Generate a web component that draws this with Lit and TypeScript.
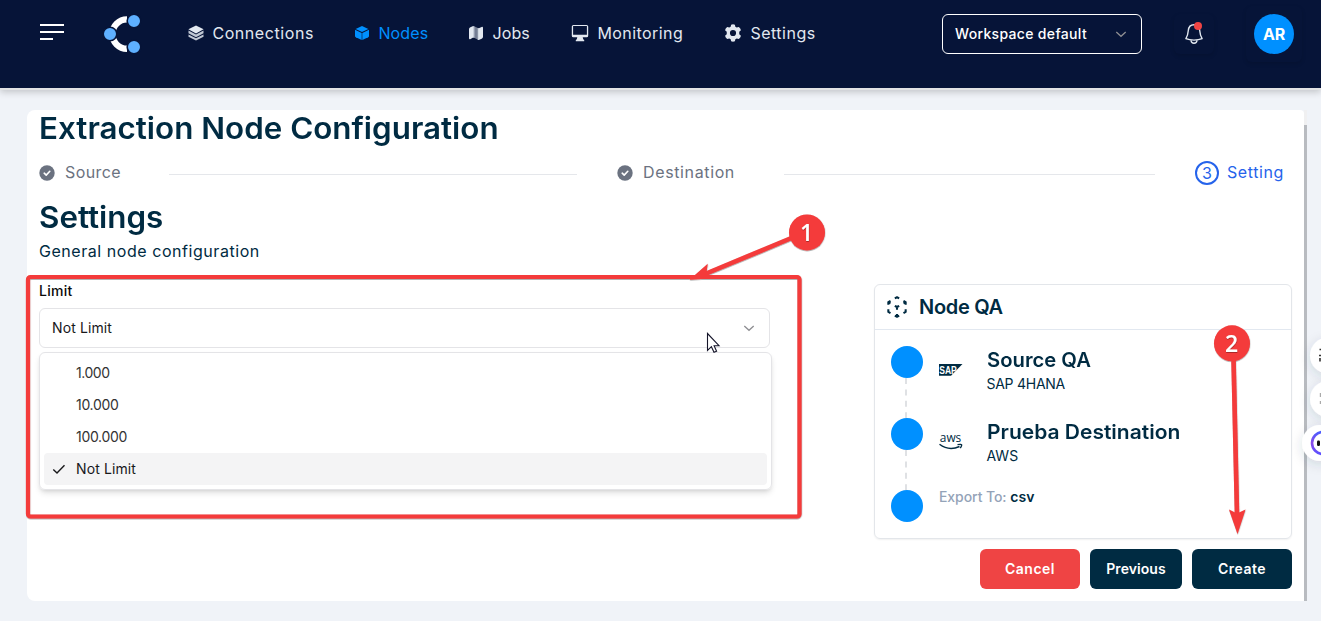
import { LitElement, html, css, svg } from 'lit';
import { customElement, property } from 'lit/decorators.js';
import { classMap } from 'lit/directives/class-map.js';

const icons = {
  layers: svg`<svg class="ico" width="16" height="16" viewBox="0 0 16 16"><path d="M8 .4 15.600 4.300 8 8.400.4 4.300Z"/><path d="M.5 5.600 8 9.400l7.500-3.800v2.700L8 12.200.5 8.300Z" opacity=".85"/><path d="M.5 9.400 8 13.200l7.500-3.800v2.300L8 15.600.5 11.700Z" opacity=".85"/></svg>`,
  cube: svg`<svg class="ico" width="16" height="16" viewBox="0 0 16 16"><path d="M8 .9 14.400 3.900 8 7.100 1.600 3.900Z"/><path d="M1 4.700 7.700 8v7L1.800 12.300Q1 11.900 1 11.100Z"/><path d="M15 4.700 8.300 8v7l5.900-2.700Q15 11.900 15 11.100Z"/></svg>`,
  map: svg`<svg class="ico" width="16" height="16" viewBox="0 0 16 16"><path d="M1 4.200Q1 2.600 2.400 2.200L5.200 1v11.600L2.600 14Q1 14.800 1 13Z"/><path d="M5.600 1 10.400 3.200V15L5.600 12.600Z" opacity=".5"/><path d="M5.200 1 6.300 1.400V12.800H5.200ZM9.800 3 10.900 3.200V15H9.800Z"/><path d="M10.800 3.200 13.600 1.900Q15 1.400 15 3V11.800Q15 13.200 13.600 13.800L10.800 15Z"/></svg>`,
  monitor: svg`<svg class="ico" width="18" height="18" viewBox="0 0 18 18"><path fill-rule="evenodd" d="M2.400.9h13.200q1.600 0 1.600 1.600v9.200q0 1.600-1.600 1.600H2.400q-1.600 0-1.600-1.600V2.500Q.8.9 2.400.9ZM2.100 2.100v8.600h13.800V2.100Z"/><path d="M6.300 13h5.400l.5 2.300 1 .6v1.300H4.800v-1.300l1-.6Z"/></svg>`,
  gear: svg`<svg class="ico gear" width="18" height="18" viewBox="0.500 0.500 17 17"><path fill-rule="evenodd" d="M7.200 1.200Q9 .4 10.800 1.200L11.200 3.200 12.500 3.900 14.500 3.300Q16.200 4.500 16.500 6.400L14.900 7.800V10.200L16.500 11.600Q16.200 13.500 14.500 14.700L12.500 14.100 11.200 14.800 10.800 16.800Q9 17.600 7.200 16.800L6.800 14.800 5.500 14.100 3.500 14.700Q1.800 13.500 1.500 11.600L3.100 10.200V7.800L1.500 6.400Q1.800 4.500 3.500 3.300L5.500 3.900 6.800 3.200ZM9 6.100A2.900 2.900 0 1 0 9 11.900 2.900 2.900 0 1 0 9 6.100Z"/></svg>`,
};

const chevron = svg`<svg class="chev" width="16" height="16" viewBox="0 0 16 16"><path d="M3.300 6 8 10.300 12.700 6"/></svg>`;
const tick = svg`<svg class="done" width="16" height="16" viewBox="0 0 16 16"><circle cx="8" cy="8" r="7.700"/><path d="M5.200 8.200 7.200 10.100 10.800 6.300"/></svg>`;

@customElement('nav-item')
export class NavItem extends LitElement {
  @property() icon: keyof typeof icons = 'layers';
  @property() label = '';
  @property({ type: Boolean, reflect: true }) active = false;
  static styles = css`
    :host { display: flex; align-items: center; color: #e2e8f0; font-size: 16px; white-space: nowrap; }
    :host([active]) { color: #0090ff; }
    .ico { fill: currentColor; flex: none; }
    .gear { margin-left: -.5px; }
    .label { margin-left: 8.400px; line-height: 20px; }
  `;
  render() {
    return html`${icons[this.icon]}<span class="label">${this.label}</span>`;
  }
}

@customElement('app-root')
export class AppRoot extends LitElement {
  private options = [
    { label: '1.000', cls: 'n1' },
    { label: '10.000', cls: 'n2' },
    { label: '100.000', cls: 'n2' },
    { label: 'Not Limit', cls: 'nl' },
  ];
  private selected = 'Not Limit';

  static styles = css`
    :host { display: block; position: relative; height: 621px; overflow: hidden; background: #f0f3f8; color: #002b42; font-family: Inter, "Noto Sans", sans-serif; }
    * { box-sizing: border-box; }
    .page { display: flex; flex-direction: column; height: 100%; }

    header { height: 90px; flex: none; display: flex; align-items: flex-start; background: #061438; border-bottom: 2px solid #e2e3e5; box-shadow: 0 2px 7px rgba(0,0,0,.2); padding-left: 40px; }
    .burger { width: 24px; height: 18px; margin-top: 23px; display: flex; flex-direction: column; justify-content: space-between; padding: 1px 0; }
    .burger i { height: 2px; background: #fff; }
    .burger i:last-child { width: 13px; }
    .logo { margin: 12px 0 0 36px; width: 44px; height: 44px; flex: none; }
    nav { display: flex; height: 40px; margin: 13px 0 0 44px; align-items: center; }
    .i1 { width: 166px; letter-spacing: .57px; }
    .i2 { width: 114px; letter-spacing: .16px; }
    .i3 { width: 103px; letter-spacing: .13px; }
    .i4 { width: 153.500px; letter-spacing: .43px; }
    .i5 { width: 93px; letter-spacing: .5px; }
    .workspace { margin: 14px 0 0 124.500px; width: 200px; height: 40px; flex: none; border: 1px solid #fff; border-radius: 6px; display: flex; align-items: center; justify-content: space-between; padding: 0 12px; color: #fff; font-size: 14px; font-weight: 500; letter-spacing: .33px; }
    .workspace span, .select span { padding-bottom: 2px; }
    .chev { fill: none; stroke: #8e8e92; stroke-width: 1.300; flex: none; }
    .bell { margin: 14px 0 0 32px; width: 40px; height: 40px; flex: none; display: grid; place-items: center; border-radius: 6px; box-shadow: 0 2px 4px rgba(0,0,0,.12); }
    .avatar-box { margin: 6px 0 0 32px; width: 56px; height: 56px; flex: none; display: grid; place-items: center; border-radius: 6px; box-shadow: 0 2px 4px rgba(0,0,0,.12); }
    .avatar { width: 40px; height: 40px; border-radius: 50%; background: #0090ff; color: #fff; display: grid; place-items: center; font-size: 16px; font-weight: 700; letter-spacing: -.2px; }

    .body { margin: 20px 14px 20px 27px; height: 491px; display: flex; }
    .card { width: 1277px; height: 491px; background: #fff; border-radius: 8px 4px 0 8px; padding-left: 12px; }
    .scroll { width: 3px; background: #f0f0f1; padding-top: 15px; }
    .thumb { height: 476px; background: #b8bbc0; }
    h1, h2 { margin: 0; font-size: 30px; font-weight: 600; line-height: 36px; white-space: nowrap; transform-origin: left center; transform: scaleX(1.045); }
    .steps { display: flex; align-items: center; height: 24px; margin-top: 15px; font-size: 16px; color: #6b7280; }
    .step { display: flex; align-items: center; flex: none; }
    .step span { margin-left: 10px; padding-bottom: 2px; }
    .s1 { width: 130px; letter-spacing: .41px; }
    .s2 { width: 167px; letter-spacing: .63px; }
    .s3 { color: #2563eb; letter-spacing: .6px; }
    .step.s3 span { margin-left: 8px; }
    .ring { width: 24px; height: 24px; border: 2px solid #2563eb; border-radius: 50%; display: grid; place-items: center; letter-spacing: 0; }
    .done { fill: #6b7280; }
    .done path { fill: none; stroke: #fff; stroke-width: 1.600; stroke-linecap: round; stroke-linejoin: round; }
    .line { height: 1px; background: #e5e7eb; margin: 3px 40px 0 0; flex: none; }
    .l1 { width: 408px; }
    .l2 { width: 371px; }
    .columns { display: flex; align-items: flex-start; }
    .left { width: 835px; }
    .left h2 { margin-top: 14px; }
    .sub { font-size: 16px; line-height: 24px; letter-spacing: .55px; margin-top: 4px; }
    .lab { color: #0a0a0a; font-size: 14px; font-weight: 500; letter-spacing: .27px; line-height: 20px; margin-top: 18px; }
    .select { width: 731px; height: 40px; margin-top: 7px; border: 1px solid #e4e4e7; border-radius: 6px; padding: 0 12px; display: flex; align-items: center; justify-content: space-between; color: #18181b; font-size: 14px; }
    .list { width: 733px; height: 138px; margin-top: 4px; border: 1px solid #e4e4e7; border-radius: 6px; padding: 4px; box-shadow: 0 4px 6px -1px rgba(0,0,0,.12), 0 2px 4px -2px rgba(0,0,0,.12); font-size: 14px; color: #333; }
    .opt { height: 32px; display: grid; grid-template-columns: 32px 1fr; align-items: center; border-radius: 4px; }
    .opt > span:last-child { padding-bottom: 1px; }
    .opt.on { background: #f4f4f5; color: #18181b; }
    .opt svg { margin-left: 7px; display: block; }
    .n1 { letter-spacing: -.47px; }
    .n2 { letter-spacing: -.31px; }
    .nl { letter-spacing: .11px; }

    .right { width: 418px; margin-top: 99px; }
    .node { height: 255px; border: 1px solid #e3e6ea; border-radius: 6px; box-shadow: 0 1px 2px rgba(0,0,0,.06); }
    .node-head { height: 45px; border-bottom: 1px solid #e2e8f0; display: flex; align-items: center; gap: 9px; padding-left: 9px; font-size: 20px; font-weight: 600; letter-spacing: -.3px; }
    .row { display: grid; grid-template-columns: 48px 47.500px 1fr; height: 72px; }
    .rows { padding: 16px 0 0 16px; }
    .dot { width: 32px; }
    .dot i { display: block; height: 32px; border-radius: 50%; background: #0090ff; }
    .dash { display: block; margin-left: 14px; }
    .brand { margin-top: 12px; overflow: visible; }
    .name { font-size: 20px; line-height: 24px; font-weight: 600; margin-top: 2px; white-space: nowrap; transform-origin: left center; }
    .kind { font-size: 14px; line-height: 20px; margin-top: 2px; }
    .q1 { transform: scaleX(1.012); }
    .q2 { transform: scaleX(1.05); }
    .k1 { letter-spacing: -.26px; }
    .export { display: block; grid-column: 2 / 4; font-size: 14px; font-weight: 500; color: #94a3b8; line-height: 14px; letter-spacing: -.07px; }
    .export b { font-weight: 600; color: #002b42; letter-spacing: .1px; }
    .actions { display: flex; justify-content: flex-end; gap: 10px; margin-top: 10px; }
    button { border: 0; border-radius: 6px; height: 40px; width: 100px; padding: 0 0 1px; background: #002b42; color: #fff; font: 600 14px Inter, sans-serif; letter-spacing: .48px; }
    .cancel { background: #ef4444; }
    .prev { width: 92px; letter-spacing: .08px; }

    .overlay { position: absolute; left: 0; top: 0; pointer-events: none; }
    .mark { fill: none; stroke: #f43b3b; }
    .fill { fill: #f43b3b; }
    .num { fill: #fff; font-family: "Open Sans", "Noto Sans", sans-serif; font-weight: 600; text-anchor: middle; }
    .sap { font: 900 11px "Liberation Sans", sans-serif; fill: #fff; }
    .aws { font: 500 12.500px "Open Sans", sans-serif; fill: #002b42; }
  `;

  render() {
    return html`
      <div class="page">
        <header>
          <div class="burger"><i></i><i></i><i></i></div>
          <svg class="logo" viewBox="100 12 44 44">
            <path d="M127 19.400A14.700 14.700 0 0 0 127 48.800" fill="none" stroke="#fff" stroke-width="6.400"/>
            <g fill="#5eb0ff" stroke="#061438" stroke-width="1.600"><circle cx="134" cy="21" r="6.800"/><circle cx="110" cy="34" r="6.800"/><circle cx="134" cy="47" r="6.800"/></g>
          </svg>
          <nav>
            <nav-item class="i1" icon="layers" label="Connections"></nav-item>
            <nav-item class="i2" icon="cube" label="Nodes" active></nav-item>
            <nav-item class="i3" icon="map" label="Jobs"></nav-item>
            <nav-item class="i4" icon="monitor" label="Monitoring"></nav-item>
            <nav-item class="i5" icon="gear" label="Settings"></nav-item>
          </nav>
          <div class="workspace"><span>Workspace default</span>${chevron}</div>
          <div class="bell">
            <svg width="20" height="24" viewBox="0 0 20 24" fill="none" stroke="#e2e8f0" stroke-width="1.400" stroke-linejoin="round">
              <path d="M10 2.700C6.600 2.700 4.600 5.200 4.300 8.500C4 12 3.700 14 1.900 16.700C4 17.600 6.800 18.100 10 18.100S16 17.600 18.100 16.700C16.300 14 16 12 15.700 8.500C15.400 5.200 13.400 2.700 10 2.700Z"/>
              <path d="M7 18.200C7.200 20.500 8.500 21.300 10 21.300S12.800 20.500 13 18.200"/>
              <circle cx="14" cy="4" r="4" fill="#ef4444" stroke="none"/>
            </svg>
          </div>
          <div class="avatar-box"><div class="avatar">AR</div></div>
        </header>

        <div class="body">
          <main class="card">
            <h1>Extraction Node Configuration</h1>
            <div class="steps">
              <div class="step s1">${tick}<span>Source</span></div><div class="line l1"></div>
              <div class="step s2">${tick}<span>Destination</span></div><div class="line l2"></div>
              <div class="step s3"><div class="ring">3</div><span>Setting</span></div>
            </div>
            <div class="columns">
              <section class="left">
                <h2>Settings</h2>
                <div class="sub">General node configuration</div>
                <div class="lab">Limit</div>
                <div class="select"><span class="nl">${this.selected}</span>${chevron}</div>
                <div class="list">
                  ${this.options.map((o) => {
                    const on = o.label === this.selected;
                    return html`<div class=${classMap({ opt: true, on })}>
                      <span>${on ? svg`<svg width="16" height="12" viewBox="0 0 16 12" fill="none" stroke="#18181b" stroke-width="1.400"><path d="M2.300 6.600 6 10.100 13.500 2.300"/></svg>` : ''}</span>
                      <span class=${o.cls}>${o.label}</span></div>`;
                  })}
                </div>
              </section>
              <aside class="right">
                <div class="node">
                  <div class="node-head">
                    <svg width="26" height="26" viewBox="0 0 24 24" fill="none" stroke="#002b42" stroke-width="1.900" stroke-linejoin="round"><path d="M6 17.600l-2-1.100v-2.500M4 10v-2.500l2-1.100M10 4.100l2-1.100l2 1.100M18 6.400l2 1.100v2.500M20 14v2.500l-2 1.120M14 19.900l-2 1.100l-2-1.100M12 12l2-1.100M18 8.600l2-1.100M12 12v2.500M12 18.500v2.500M12 12l-2-1.120M6 8.600l-2-1.100"/></svg>
                    <span>Node QA</span>
                  </div>
                  <div class="rows">
                    <div class="row">
                      <div class="dot"><i></i>${this.dash()}</div>
                      <svg class="brand" width="24" height="24" viewBox="0 0 24 24"><path d="M0 6H23.500L12 17.800H0Z" fill="#002b42"/><text class="sap" x=".3" y="15.700" textLength="17.500" lengthAdjust="spacingAndGlyphs">SAP</text></svg>
                      <div><div class="name q1">Source QA</div><div class="kind k1">SAP 4HANA</div></div>
                    </div>
                    <div class="row">
                      <div class="dot"><i></i>${this.dash()}</div>
                      <svg class="brand" width="24" height="24" viewBox="0 0 24 24"><text class="aws" x=".800" y="12.300" textLength="21.500" lengthAdjust="spacingAndGlyphs">aws</text><path d="M.5 14.300Q10 21.500 20.500 16.500M18.500 14.600Q22.800 13.900 22.700 15T21.300 18.200" fill="none" stroke="#002b42" stroke-width="1.400"/></svg>
                      <div><div class="name q2">Prueba Destination</div><div class="kind">AWS</div></div>
                    </div>
                    <div class="row">
                      <div class="dot"><i></i></div>
                      <div class="export">Export To: <b>csv</b></div>
                    </div>
                  </div>
                </div>
                <div class="actions"><button class="cancel">Cancel</button><button class="prev">Previous</button><button>Create</button></div>
              </aside>
            </div>
          </main>
          <div class="scroll"><div class="thumb"></div></div>
        </div>
      </div>

      <svg class="overlay" width="1321" height="621" viewBox="0 0 1321 621">
        <defs>
          <linearGradient id="bot" x1="0" y1="0" x2="0" y2="1"><stop offset="0" stop-color="#4b5cff"/><stop offset=".5" stop-color="#8a4be8"/><stop offset="1" stop-color="#5b50ff"/></linearGradient>
          <filter id="soft" x="-50%" y="-50%" width="200%" height="200%"><feDropShadow dx="0" dy="3" stdDeviation="6" flood-color="#334155" flood-opacity=".15"/></filter>
          <filter id="drop" filterUnits="userSpaceOnUse" x="0" y="190" width="1321" height="360"><feDropShadow dx=".2" dy=".6" stdDeviation=".5" flood-color="#000" flood-opacity=".5"/></filter>
        </defs>
        <g fill="#fff">
          <circle cx="1328" cy="355.500" r="18" filter="url(#soft)"/>
          <circle cx="1328" cy="399" r="18" filter="url(#soft)"/>
          <circle cx="1320" cy="443" r="18" filter="url(#soft)"/>
        </g>
        <path d="M1319.500 349.500h2M1319 355.500h2M1320 358v3.500" stroke="#333" stroke-width="1.600"/>
        <path d="M1320.500 393v4M1320.500 401v3" stroke="#aaa" stroke-width="1.400"/>
        <circle cx="1323" cy="443" r="11" fill="#fff" stroke="url(#bot)" stroke-width="2.600"/>
        <rect x="1317" y="440.500" width="3" height="5.500" rx="1.200" fill="#111"/>
        <path d="M707.500 333.500V350.500L711.400 346.700 714 352.300 716.600 351.200 714.100 345.700H719Z" fill="#fff" stroke="#15152a" stroke-width="1.100"/>
        <g filter="url(#drop)">
          <rect class="mark" x="28" y="277" width="771.500" height="239.500" rx="2.500" stroke-width="4.200"/>
          <path class="mark" d="M795 236.500 705 274" stroke-width="4.600"/>
          <path class="fill" d="M689.500 279.800 707.700 263.700 706.500 272.700 713.500 278.300Z"/>
          <path class="mark" d="M1233.500 358 1237 514" stroke-width="4.600"/>
          <path class="fill" d="M1237.500 534 1229 509.500 1237 513.500 1245.500 509.500Z"/>
          <circle class="fill" cx="807" cy="232.400" r="18"/>
          <circle class="fill" cx="1232" cy="343.300" r="18"/>
        </g>
        <g filter="url(#drop)">
          <text class="num" x="806.500" y="240.600" font-size="23">1</text>
          <text class="num" x="1231.500" y="351.600" font-size="23">2</text>
        </g>
      </svg>
    `;
  }

  private dash() {
    return svg`<svg class="dash" width="2" height="40" viewBox="0 0 2 40"><path d="M1 0V40" stroke="#dfe1e4" stroke-width="2" stroke-dasharray="6 5.400"/></svg>`;
  }
}
